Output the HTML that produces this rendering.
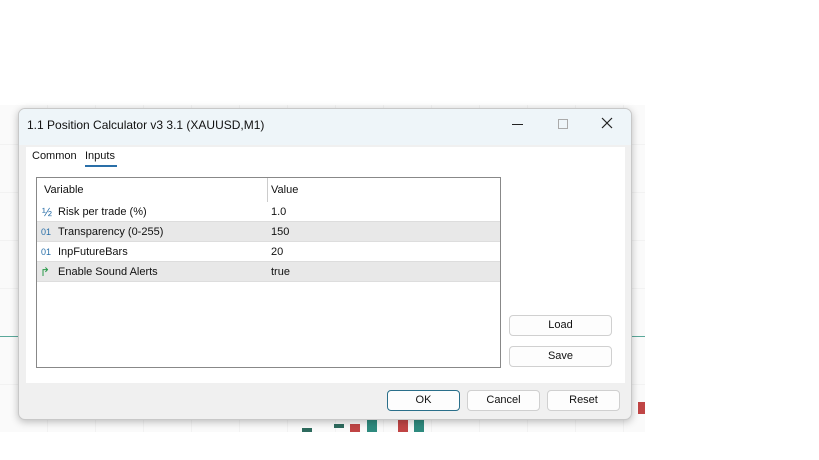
<!DOCTYPE html>
<html><head><style>
body{margin:0;width:819px;height:460px;background:#fff;position:relative;overflow:hidden;font-family:"Liberation Sans",sans-serif;font-size:11px;color:#111}
.a{position:absolute}
.btn{position:absolute;background:#fdfdfd;border:1px solid #d0d0d0;border-radius:4px;text-align:center;line-height:19px;font-size:11px}
.row{position:absolute;left:0;width:463px;height:20px;line-height:20px;border-bottom:1px solid #ddd;box-sizing:border-box}
.row span{position:absolute}
</style></head><body>
<div class="a" style="left:0;top:105px;width:645px;height:327px;background:#fafafa;background-image:repeating-linear-gradient(90deg,transparent 0 47px,#f2f2f2 47px 48px),repeating-linear-gradient(0deg,transparent 0 47px,#f2f2f2 47px 48px)"></div>
<div class="a" style="left:0;top:336px;width:645px;height:1px;background:#5aa89a"></div>
<div class="a" style="left:302px;top:428px;width:10px;height:4px;background:#2e6b5e"></div>
<div class="a" style="left:334px;top:424px;width:10px;height:4px;background:#2e6b5e"></div>
<div class="a" style="left:350px;top:424px;width:10px;height:8px;background:#c04545"></div>
<div class="a" style="left:367px;top:418px;width:10px;height:14px;background:#2e8a7e"></div>
<div class="a" style="left:398px;top:418px;width:10px;height:14px;background:#c04545"></div>
<div class="a" style="left:414px;top:418px;width:10px;height:14px;background:#2e8a7e"></div>
<div class="a" style="left:638px;top:402px;width:7px;height:12px;background:#c04545"></div>
<div class="a" style="left:18px;top:108px;width:612px;height:310px;background:#f0f0f0;border:1px solid #c8c8c8;border-radius:7px;box-shadow:0 2px 8px rgba(0,0,0,.25);overflow:hidden">
 <div class="a" style="left:0;top:0;width:612px;height:36px;background:#eef5f9"></div>
 <div class="a" style="left:8px;top:9px;font-size:12px">1.1 Position Calculator v3 3.1 (XAUUSD,M1)</div>
 <div class="a" style="left:493px;top:15px;width:11px;height:1px;background:#222"></div>
 <div class="a" style="left:539px;top:10px;width:8px;height:8px;border:1px solid #aaa"></div>
 <svg class="a" style="left:582px;top:8px" width="12" height="12"><path d="M1 1L11 11M11 1L1 11" stroke="#222" stroke-width="1.2"/></svg>
 <div class="a" style="left:7px;top:38px;width:599px;height:236px;background:#fff"></div>
 <div class="a" style="left:13px;top:41px">Common</div>
 <div class="a" style="left:66px;top:41px">Inputs</div>
 <div class="a" style="left:66px;top:56px;width:32px;height:2px;background:#2a6fa8"></div>
 <div class="a" style="left:17px;top:68px;width:463px;height:189px;border:1px solid #888;background:#fff">
  <div class="a" style="left:230px;top:0;width:1px;height:104px;background:#ccc"></div>
  <div class="row" style="top:0;height:24px;line-height:24px;border:none"><span style="left:7px">Variable</span><span style="left:234px">Value</span></div>
  <div class="row" style="top:24px;background:#fff"><span style="left:5px;color:#2a6fa8;font-size:12px">½</span><span style="left:21px">Risk per trade (%)</span><span style="left:234px">1.0</span></div>
  <div class="row" style="top:44px;background:#e8e8e8"><span style="left:4px;color:#2a6fa8;font-size:9px">01</span><span style="left:21px">Transparency (0-255)</span><span style="left:234px">150</span></div>
  <div class="row" style="top:64px;background:#fff"><span style="left:4px;color:#2a6fa8;font-size:9px">01</span><span style="left:21px">InpFutureBars</span><span style="left:234px">20</span></div>
  <div class="row" style="top:84px;background:#e8e8e8"><span style="left:3px;color:#2a9a4a;font-size:12px">↱</span><span style="left:21px">Enable Sound Alerts</span><span style="left:234px">true</span></div>
 </div>
 <div class="btn" style="left:490px;top:206px;width:101px;height:19px">Load</div>
 <div class="btn" style="left:490px;top:237px;width:101px;height:19px">Save</div>
 <div class="btn" style="left:368px;top:281px;width:71px;height:19px;border-color:#2a6f8a">OK</div>
 <div class="btn" style="left:448px;top:281px;width:71px;height:19px">Cancel</div>
 <div class="btn" style="left:528px;top:281px;width:71px;height:19px">Reset</div>
</div>
</body></html>
